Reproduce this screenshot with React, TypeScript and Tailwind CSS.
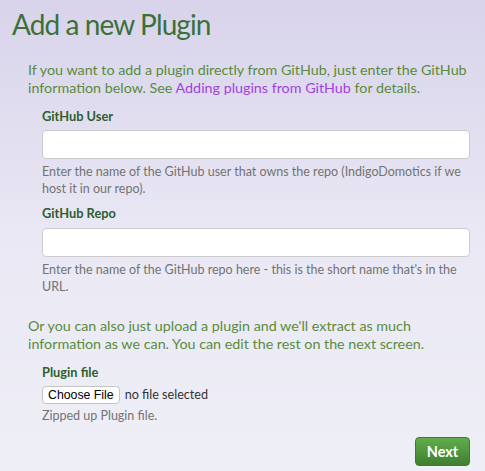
export default function App() {
  return (
    <div className="min-h-[471px] w-full bg-gradient-to-b from-[#d8d3eb] via-[#e9e8f4] to-[#efeff7] font-['Lato','Liberation_Sans',sans-serif]">
      <div className="pl-3 pr-[15px] pt-[6px]">
        <h1 className="text-[28px] leading-[36px] tracking-[-0.9px] text-[#3b7039]">Add a new Plugin</h1>
        <div className="pl-4">
          <p className="mt-[19px] text-[14.3px] leading-[18px] text-[#5a8b3c]">
            If you want to add a plugin directly from GitHub, just enter the GitHub information below. See{" "}
            <a className="text-[#a23fe0]">Adding plugins from GitHub</a> for details.
          </p>
          <div className="pl-[14px]">
            <label className="mt-[10px] block text-[12.8px] font-bold leading-[18px] text-[#2e5e2e]">GitHub User</label>
            <input className="mt-[5px] block h-[29px] w-full rounded-[4px] border border-[#cccccc] bg-white" />
            <p className="mt-[4px] text-[12.5px] leading-[17px] text-[#737373]">
              Enter the name of the GitHub user that owns the repo (IndigoDomotics if we host it in our repo).
            </p>
            <label className="mt-[7px] block text-[12.8px] font-bold leading-[18px] text-[#2e5e2e]">GitHub Repo</label>
            <input className="mt-[6px] block h-[29px] w-full rounded-[4px] border border-[#cccccc] bg-white" />
            <p className="mt-[4px] text-[12.5px] leading-[17px] text-[#737373]">
              Enter the name of the GitHub repo here - this is the short name that's in the URL.
            </p>
          </div>
          <p className="mt-[22px] text-[14.3px] leading-[18px] text-[#5a8b3c]">
            Or you can also just upload a plugin and we'll extract as much information as we can. You can edit the rest on the next screen.
          </p>
          <div className="pl-[14px]">
            <label className="mt-[10px] block text-[12.8px] font-bold leading-[18px] text-[#2e5e2e]">Plugin file</label>
            <div className="mt-[5px] flex h-[18px] items-center">
              <span className="flex h-[18px] items-center rounded-[4px] border border-[#c4c4c4] bg-white px-[5px] font-['Liberation_Sans',sans-serif] text-[12.3px] text-black">
                Choose File
              </span>
              <span className="ml-[5px] text-[12.6px] text-[#333]">no file selected</span>
            </div>
            <p className="mt-[3px] text-[12.5px] leading-[17px] text-[#737373]">Zipped up Plugin file.</p>
            <div className="mt-[13px] flex justify-end">
              <button className="h-[29px] w-[55px] rounded-[4px] border border-[#3d7a2e] bg-gradient-to-b from-[#62ad4b] to-[#3e7f30] text-[14.5px] font-bold text-white">
                Next
              </button>
            </div>
          </div>
        </div>
      </div>
    </div>
  );
}
